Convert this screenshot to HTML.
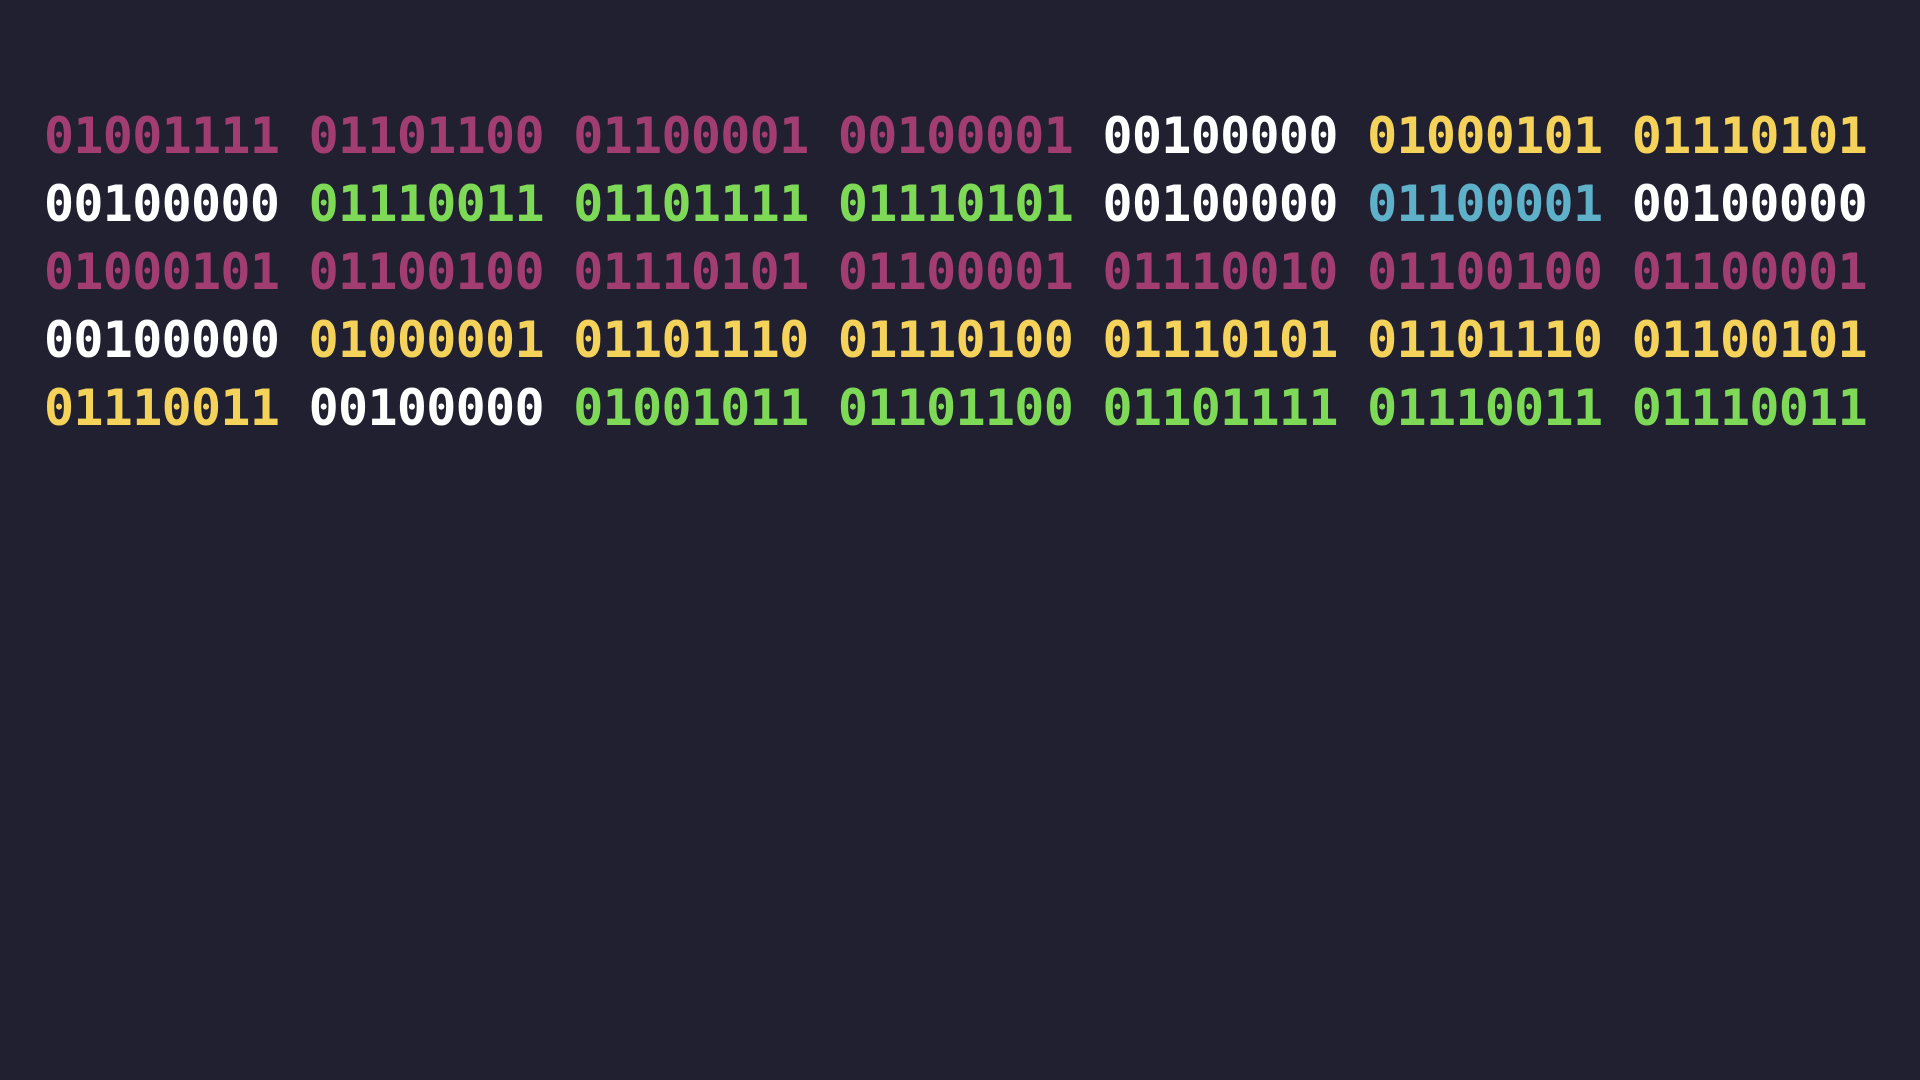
<!DOCTYPE html>
<html><head><style>
html,body{margin:0;background:#202030;width:1920px;height:1080px;overflow:hidden}
.w{position:absolute;left:44px;top:102px;font-family:"DejaVu Sans Mono","Liberation Mono",monospace;font-weight:bold;font-size:50px;letter-spacing:-0.7px;line-height:68px;white-space:pre;color:#fff}
.p{color:#a23d72}.g{color:#7ed957}.y{color:#f5d35a}.b{color:#5fb0c9}
</style></head><body><div class="w"><span class="p">01001111 01101100 01100001 00100001</span> 00100000 <span class="y">01000101 01110101</span>
00100000 <span class="g">01110011 01101111 01110101</span> 00100000 <span class="b">01100001</span> 00100000
<span class="p">01000101 01100100 01110101 01100001 01110010 01100100 01100001</span>
00100000 <span class="y">01000001 01101110 01110100 01110101 01101110 01100101</span>
<span class="y">01110011</span> 00100000 <span class="g">01001011 01101100 01101111 01110011 01110011</span></div></body></html>
